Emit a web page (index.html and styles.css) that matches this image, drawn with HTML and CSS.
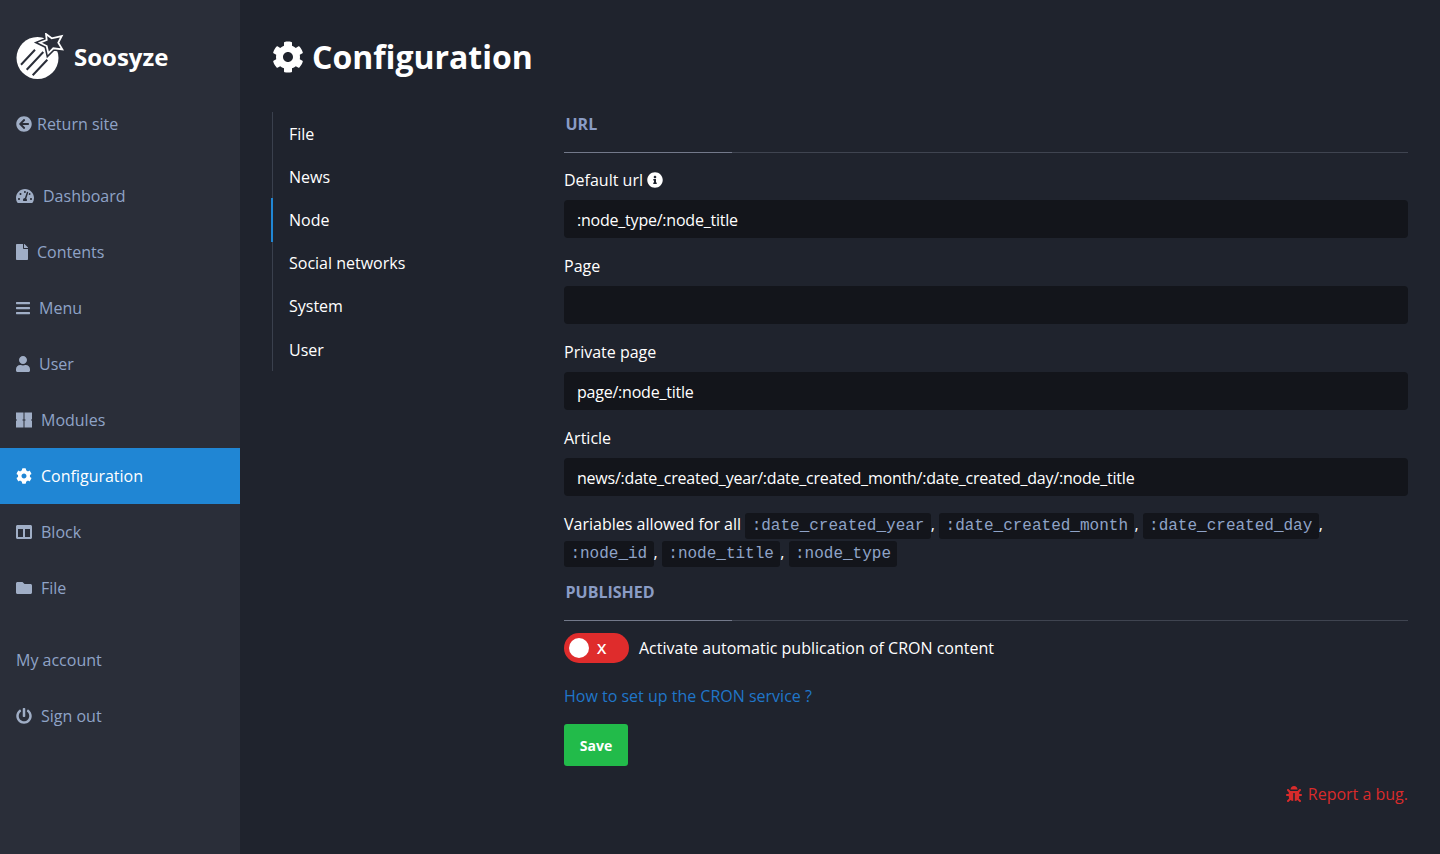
FILE: index.html
```html
<!DOCTYPE html>
<html lang="en">
<head>
  <meta charset="UTF-8" />
  <meta name="viewport" content="width=device-width, initial-scale=1.0" />
  <title>Configuration | Soosyze</title>
  <link rel="stylesheet" href="styles.css">
</head>
<body>

  <aside class="sidebar">
    <a class="brand" href="#">
      <svg class="brand-logo" viewBox="0 0 50 50" width="50" height="50">
        <circle cx="21.500" cy="25" r="21" fill="#fff"/>
        <path d="M5 31.700 L19 16.700 M10.700 36.700 L27.300 19 M16.700 42.300 L31.300 26.700" stroke="#2a2e39" stroke-width="2" fill="none"/>
        <path d="M30 1 L35.700 5.300 L45.700 3 L42.300 9.700 L46.300 16.300 L37.300 15.300 L32.300 20.300 L30.700 13 L24 9.700 L30.700 7 Z" fill="#2a2e39" stroke="#2a2e39" stroke-width="5"/>
        <path d="M30 1 L35.700 5.300 L45.700 3 L42.300 9.700 L46.300 16.300 L37.300 15.300 L32.300 20.300 L30.700 13 L24 9.700 L30.700 7 Z" fill="#2a2e39" stroke="#fff" stroke-width="1.800"/>
      </svg>
      <span>Soosyze</span>
    </a>

    <a class="side-link side-return" href="#">
      <svg class="icon" viewBox="0 0 512 512"><path d="M256 504C119 504 8 393 8 256S119 8 256 8s248 111 248 248-111 248-248 248zm28.900-143.600L209.400 288H392c13.300 0 24-10.700 24-24v-16c0-13.300-10.700-24-24-24H209.400l75.500-72.400c9.700-9.300 9.900-24.800.4-34.300l-11-10.900c-9.400-9.400-24.600-9.400-33.900 0L107.700 239c-9.400 9.400-9.400 24.600 0 33.900l132.700 132.700c9.400 9.400 24.600 9.400 33.900 0l11-10.900c9.500-9.500 9.300-25-.4-34.300z"/></svg>
      Return site
    </a>

    <nav class="side-nav">
      <a class="side-link gap-dash" href="#">
        <svg class="icon icon-dash" viewBox="0 0 576 512"><path d="M288 32C128.940 32 0 160.940 0 320c0 52.800 14.250 102.260 39.060 144.800 5.610 9.620 16.300 15.200 27.440 15.200h443c11.140 0 21.830-5.580 27.440-15.200C561.750 422.260 576 372.800 576 320c0-159.060-128.940-288-288-288zm0 64c14.710 0 26.580 10.130 30.320 23.650-1.110 2.260-2.640 4.230-3.450 6.670l-9.220 27.670c-5.130 3.490-10.970 6.010-17.640 6.010-17.670 0-32-14.330-32-32S270.330 96 288 96zM96 384c-17.670 0-32-14.330-32-32s14.330-32 32-32 32 14.330 32 32-14.330 32-32 32zm48-160c-17.670 0-32-14.330-32-32s14.330-32 32-32 32 14.330 32 32-14.330 32-32 32zm246.770-72.410l-61.330 184C343.130 347.330 352 364.540 352 384c0 11.720-3.380 22.550-8.880 32H232.880c-5.500-9.450-8.880-20.280-8.880-32 0-33.940 26.500-61.430 59.900-63.590l61.340-184.010c4.170-12.560 17.730-19.450 30.360-15.170 12.570 4.190 19.350 17.790 15.170 30.360zm14.660 57.200l15.520-46.550c3.470-1.290 7.130-2.230 11.050-2.230 17.670 0 32 14.330 32 32s-14.330 32-32 32c-11.380-.01-20.890-6.280-26.570-15.220zM480 384c-17.670 0-32-14.330-32-32s14.330-32 32-32 32 14.330 32 32-14.330 32-32 32z"/></svg>
        Dashboard
      </a>
      <a class="side-link" href="#">
        <svg class="icon icon-file" viewBox="0 0 384 512"><path d="M224 136V0H24C10.700 0 0 10.700 0 24v464c0 13.300 10.700 24 24 24h336c13.300 0 24-10.700 24-24V160H248c-13.200 0-24-10.800-24-24zm160-14.100v6.100H256V0h6.100c6.400 0 12.500 2.500 17 7l97.900 98c4.500 4.500 7 10.600 7 16.900z"/></svg>
        Contents
      </a>
      <a class="side-link" href="#">
        <svg class="icon icon-narrow" viewBox="0 0 448 512"><path d="M16 132h416c8.837 0 16-7.163 16-16V76c0-8.837-7.163-16-16-16H16C7.163 60 0 67.163 0 76v40c0 8.837 7.163 16 16 16zm0 160h416c8.837 0 16-7.163 16-16v-40c0-8.837-7.163-16-16-16H16c-8.837 0-16 7.163-16 16v40c0 8.837 7.163 16 16 16zm0 160h416c8.837 0 16-7.163 16-16v-40c0-8.837-7.163-16-16-16H16c-8.837 0-16 7.163-16 16v40c0 8.837 7.163 16 16 16z"/></svg>
        Menu
      </a>
      <a class="side-link" href="#">
        <svg class="icon icon-narrow" viewBox="0 0 448 512"><path d="M224 256c70.700 0 128-57.300 128-128S294.700 0 224 0 96 57.300 96 128s57.300 128 128 128zm89.600 32h-16.700c-22.200 10.200-46.900 16-72.900 16s-50.600-5.800-72.900-16h-16.700C60.200 288 0 348.200 0 422.400V464c0 26.500 21.500 48 48 48h352c26.500 0 48-21.500 48-48v-41.600c0-74.200-60.200-134.400-134.400-134.400z"/></svg>
        User
      </a>
      <a class="side-link" href="#">
        <svg class="icon" viewBox="0 0 16 16"><path d="M0 .500h7.500v7h-1v1h1v7H0v-7h1v-1H0z M8.500 .500H16v7h-1v1h1v7H8.500v-7h1v-1h-1z"/></svg>
        Modules
      </a>
      <a class="side-link active" href="#">
        <svg class="icon" viewBox="0 0 512 512"><path d="M487.400 315.700l-42.600-24.600c4.300-23.200 4.300-47 0-70.200l42.600-24.600c4.900-2.800 7.100-8.600 5.500-14-11.100-35.600-30-67.800-54.700-94.600-3.800-4.100-10-5.100-14.800-2.300L380.800 110c-17.900-15.400-38.500-27.300-60.800-35.100V25.800c0-5.600-3.900-10.500-9.400-11.700-36.700-8.200-74.300-7.800-109.200 0-5.500 1.200-9.400 6.100-9.400 11.700V75c-22.200 7.900-42.800 19.800-60.800 35.100L88.700 85.500c-4.900-2.800-11-1.900-14.800 2.300-24.700 26.700-43.600 58.900-54.700 94.600-1.700 5.400.6 11.200 5.500 14L67.300 221c-4.300 23.200-4.300 47 0 70.200l-42.600 24.600c-4.900 2.800-7.100 8.600-5.500 14 11.100 35.600 30 67.800 54.700 94.600 3.800 4.100 10 5.100 14.800 2.300l42.600-24.600c17.900 15.400 38.500 27.300 60.800 35.100v49.200c0 5.600 3.900 10.500 9.400 11.700 36.700 8.200 74.300 7.800 109.200 0 5.500-1.200 9.400-6.100 9.400-11.700v-49.200c22.200-7.900 42.800-19.800 60.800-35.100l42.600 24.600c4.900 2.800 11 1.900 14.800-2.300 24.700-26.700 43.600-58.900 54.700-94.600 1.500-5.500-.7-11.300-5.600-14.100zM256 336c-44.100 0-80-35.900-80-80s35.900-80 80-80 80 35.900 80 80-35.900 80-80 80z"/></svg>
        Configuration
      </a>
      <a class="side-link" href="#">
        <svg class="icon" viewBox="0 0 512 512"><path d="M464 32H48C21.490 32 0 53.490 0 80v352c0 26.510 21.490 48 48 48h416c26.510 0 48-21.490 48-48V80c0-26.510-21.490-48-48-48zM224 416H64V160h160v256zm224 0H288V160h160v256z"/></svg>
        Block
      </a>
      <a class="side-link" href="#">
        <svg class="icon" viewBox="0 0 512 512"><path d="M464 128H272l-64-64H48C21.490 64 0 85.490 0 112v288c0 26.510 21.490 48 48 48h416c26.510 0 48-21.490 48-48V176c0-26.510-21.490-48-48-48z"/></svg>
        File
      </a>
    </nav>

    <nav class="side-nav side-user">
      <a class="side-link" href="#">My account</a>
      <a class="side-link" href="#">
        <svg class="icon" viewBox="0 0 512 512"><path d="M400 54.100c63 45 104 118.600 104 201.900 0 136.800-110.800 247.700-247.500 248C120 504.300 8.200 393 8 256.400 7.900 173.100 48.900 99.300 111.800 54.200c11.700-8.300 28-4.800 35 7.700L162.600 90c5.900 10.500 3.100 23.800-6.600 31-41.500 30.800-68 79.600-68 134.900-.1 92.300 74.500 168.100 168 168.100 91.600 0 168.600-74.200 168-169.100-.3-51.800-24.700-101.800-68.100-134-9.700-7.200-12.400-20.500-6.500-30.900l15.800-28.100c7-12.400 23.200-16.100 34.800-7.800zM296 264V24c0-13.300-10.700-24-24-24h-32c-13.300 0-24 10.700-24 24v240c0 13.300 10.700 24 24 24h32c13.300 0 24-10.700 24-24z"/></svg>
        Sign out
      </a>
    </nav>
  </aside>

  <main class="content">
    <h1 class="page-title">
      <svg class="title-icon" viewBox="0 0 512 512"><path d="M487.400 315.700l-42.600-24.600c4.300-23.200 4.300-47 0-70.200l42.600-24.600c4.900-2.800 7.100-8.600 5.500-14-11.100-35.600-30-67.800-54.700-94.600-3.800-4.100-10-5.100-14.800-2.300L380.800 110c-17.900-15.400-38.500-27.300-60.800-35.100V25.800c0-5.600-3.900-10.500-9.400-11.700-36.700-8.200-74.300-7.800-109.200 0-5.500 1.200-9.400 6.100-9.400 11.700V75c-22.200 7.900-42.800 19.800-60.800 35.100L88.700 85.500c-4.900-2.800-11-1.900-14.800 2.300-24.700 26.700-43.600 58.900-54.700 94.600-1.700 5.400.6 11.200 5.500 14L67.300 221c-4.300 23.200-4.300 47 0 70.200l-42.600 24.600c-4.900 2.800-7.100 8.600-5.500 14 11.100 35.600 30 67.800 54.700 94.600 3.800 4.100 10 5.100 14.800 2.300l42.600-24.600c17.900 15.400 38.500 27.300 60.800 35.100v49.200c0 5.600 3.900 10.500 9.400 11.700 36.700 8.200 74.300 7.800 109.200 0 5.500-1.200 9.400-6.100 9.400-11.700v-49.200c22.200-7.900 42.800-19.800 60.800-35.100l42.600 24.600c4.900 2.800 11 1.900 14.800-2.300 24.700-26.700 43.600-58.900 54.700-94.600 1.500-5.500-.7-11.300-5.600-14.100zM256 336c-44.100 0-80-35.900-80-80s35.900-80 80-80 80 35.900 80 80-35.900 80-80 80z"/></svg>
      Configuration
    </h1>

    <div class="columns">
      <ul class="config-nav">
        <li><a href="#">File</a></li>
        <li><a href="#">News</a></li>
        <li class="active"><a href="#">Node</a></li>
        <li><a href="#">Social networks</a></li>
        <li><a href="#">System</a></li>
        <li><a href="#">User</a></li>
      </ul>

      <form class="config-form">
        <h2 class="legend">URL</h2>

        <label class="field-label" for="url_default">Default url
          <svg class="info" viewBox="0 0 512 512"><path d="M256 8C119.043 8 8 119.083 8 256c0 136.997 111.043 248 248 248s248-111.003 248-248C504 119.083 392.957 8 256 8zm0 110c23.196 0 42 18.804 42 42s-18.804 42-42 42-42-18.804-42-42 18.804-42 42-42zm56 254c0 6.627-5.373 12-12 12h-88c-6.627 0-12-5.373-12-12v-24c0-6.627 5.373-12 12-12h12v-64h-12c-6.627 0-12-5.373-12-12v-24c0-6.627 5.373-12 12-12h64c6.627 0 12 5.373 12 12v100h12c6.627 0 12 5.373 12 12v24z"/></svg>
        </label>
        <input class="field" id="url_default" type="text" value=":node_type/:node_title">

        <label class="field-label" for="url_page">Page</label>
        <input class="field" id="url_page" type="text" value="">

        <label class="field-label" for="url_private">Private page</label>
        <input class="field" id="url_private" type="text" value="page/:node_title">

        <label class="field-label" for="url_article">Article</label>
        <input class="field" id="url_article" type="text" value="news/:date_created_year/:date_created_month/:date_created_day/:node_title">

        <p class="variables">Variables allowed for all <code>:date_created_year</code>, <code>:date_created_month</code>, <code>:date_created_day</code>, <code>:node_id</code>, <code>:node_title</code>, <code>:node_type</code></p>

        <h2 class="legend legend-next">PUBLISHED</h2>

        <div class="toggle-row">
          <span class="toggle"><span class="toggle-knob"></span><span class="toggle-x">X</span></span>
          <span>Activate automatic publication of CRON content</span>
        </div>

        <a class="help-link" href="#">How to set up the CRON service ?</a>

        <button class="btn-save" type="button">Save</button>
      </form>
    </div>

    <footer class="page-foot">
      <a class="bug-link" href="#">
        <svg class="bug" viewBox="0 0 512 512"><path d="M511.988 288.900c-.478 17.430-15.217 31.100-32.653 31.100H424v16c0 21.864-4.882 42.584-13.600 61.145l60.228 60.228c12.496 12.497 12.496 32.758 0 45.255-12.498 12.497-32.759 12.496-45.256 0l-54.736-54.736C345.886 467.965 314.351 480 280 480V236c0-6.627-5.373-12-12-12h-24c-6.627 0-12 5.373-12 12v244c-34.351 0-65.886-12.035-90.636-32.108l-54.736 54.736c-12.498 12.497-32.759 12.496-45.256 0-12.496-12.497-12.496-32.758 0-45.255l60.228-60.228C92.882 378.584 88 357.864 88 336v-16H32.666C15.230 320 .491 306.330.013 288.900-.484 270.816 14.028 256 32 256h56v-58.745l-46.628-46.628c-12.496-12.497-12.496-32.758 0-45.255 12.498-12.497 32.758-12.497 45.256 0L141.255 160h229.489l54.627-54.627c12.498-12.497 32.758-12.497 45.256 0 12.496 12.497 12.496 32.758 0 45.255L424 197.255V256h56c18.030 0 32.465 14.980 31.988 32.900zM257 0c-61.856 0-112 50.144-112 112h224C369 50.144 318.856 0 257 0z"/></svg>
        Report a bug.
      </a>
    </footer>
  </main>

</body>
</html>
```

FILE: styles.css
```css
* { box-sizing: border-box; margin: 0; padding: 0; }
body {
  display: flex;
  min-height: 854px;
  background-color: #1f232d;
  font-family: 'Open Sans', sans-serif;
  font-size: 16px;
  line-height: 24px;
  color: #fff;
}
a { text-decoration: none; color: inherit; }

/* sidebar */
.sidebar {
  flex: 0 0 240px;
  background-color: #2a2e39;
}
.brand {
  display: flex;
  align-items: center;
  height: 96px;
  padding: 17px 0 0 16px;
  font-size: 24px;
  font-weight: 700;
  color: #fff;
}
.brand-logo { margin: 3px 8px 0 0; }
.side-link {
  display: flex;
  align-items: center;
  height: 56px;
  padding-left: 16px;
  color: #8fa3c7;
}
.side-nav { margin-top: 16px; }
.side-link.active {
  background-color: #2086d4;
  color: #fff;
}
.icon {
  width: 16px;
  height: 16px;
  margin-right: 9px;
  fill: #a0aec6;
}
.side-return .icon { margin-right: 5px; }
.active .icon { fill: #fff; }
.icon-dash { width: 18px; margin-right: 9px; }
.icon-file { width: 12px; margin-right: 9px; }
.icon-narrow { width: 14px; margin-right: 9px; }

/* main */
.content {
  flex: 1;
  padding: 0 32px;
}
.page-title {
  display: flex;
  align-items: center;
  height: 112px;
  padding-top: 2px;
  font-size: 32px;
  line-height: 40px;
  font-weight: 700;
}
.title-icon {
  width: 32px;
  height: 32px;
  margin: 0 8px 0 0;
  fill: #fff;
}
.columns { display: flex; }

.config-nav {
  flex: 0 0 292px;
  align-self: flex-start;
  list-style: none;
}
.config-nav li {
  height: 43.200px;
  padding: 9.600px 16px;
  border-left: 1px solid #3a404d;
}
.config-nav .active {
  border-left: 2px solid #2086d4;
  margin-left: -1px;
}

.config-form { flex: 1; }
.legend {
  height: 41px;
  padding: 0 0 0 1.500px;
  font-size: 16px;
  line-height: 24px;
  font-weight: 700;
  color: #8a9cc5;
  border-bottom: 1px solid #3f4450;
  position: relative;
}
.legend::after {
  content: '';
  position: absolute;
  left: 0;
  bottom: -1px;
  width: 168px;
  height: 1px;
  background-color: #73798a;
}
.legend-next { margin-top: 14px; }
.field-label {
  display: flex;
  align-items: center;
  height: 24px;
  margin: 15px 0 8px;
}
.field-label + .field { display: block; }
.field {
  width: 100%;
  height: 38px;
  padding: 2px 13px 0;
  border: 0;
  border-radius: 4px;
  background-color: #13151b;
  color: #fff;
  font-family: 'Open Sans', sans-serif;
  font-size: 16px;
  letter-spacing: -0.220px;
}
.field + .field-label { margin-top: 16px; }
.variables {
  margin-top: 14px;
  line-height: 28px;
}
code {
  padding: 4px 6.400px;
  border-radius: 3px;
  background-color: #13151b;
  color: #8fa3c7;
  font-family: 'Liberation Mono', monospace;
  font-size: 16px;
  line-height: 16px;
}
.toggle-row {
  display: flex;
  align-items: center;
  margin-top: 12px;
}
.toggle {
  display: flex;
  align-items: center;
  width: 65px;
  height: 30px;
  margin-right: 10px;
  padding-left: 5px;
  border-radius: 15px;
  background-color: #df2c2c;
}
.toggle-knob {
  width: 20px;
  height: 20px;
  border-radius: 50%;
  background-color: #fff;
}
.toggle-x {
  margin-left: 8px;
  font-size: 15px;
  font-weight: 600;
}
.help-link {
  display: block;
  margin-top: 21px;
  color: #1f76c9;
}
.btn-save {
  display: block;
  width: 64px;
  height: 42px;
  margin-top: 16px;
  border: 0;
  border-radius: 3px;
  background-color: #22bb4a;
  color: #fff;
  font-family: 'Open Sans', sans-serif;
  font-size: 14px;
  font-weight: 700;
  cursor: pointer;
}
.info {
  width: 16px;
  height: 16px;
  margin-left: 4px;
  fill: #fff;
}
.page-foot {
  display: flex;
  justify-content: flex-end;
  margin-top: 16px;
}
.bug-link {
  display: flex;
  align-items: center;
  color: #d92b2b;
}
.bug {
  width: 16px;
  height: 16px;
  margin-right: 6px;
  fill: #d92b2b;
}
```
